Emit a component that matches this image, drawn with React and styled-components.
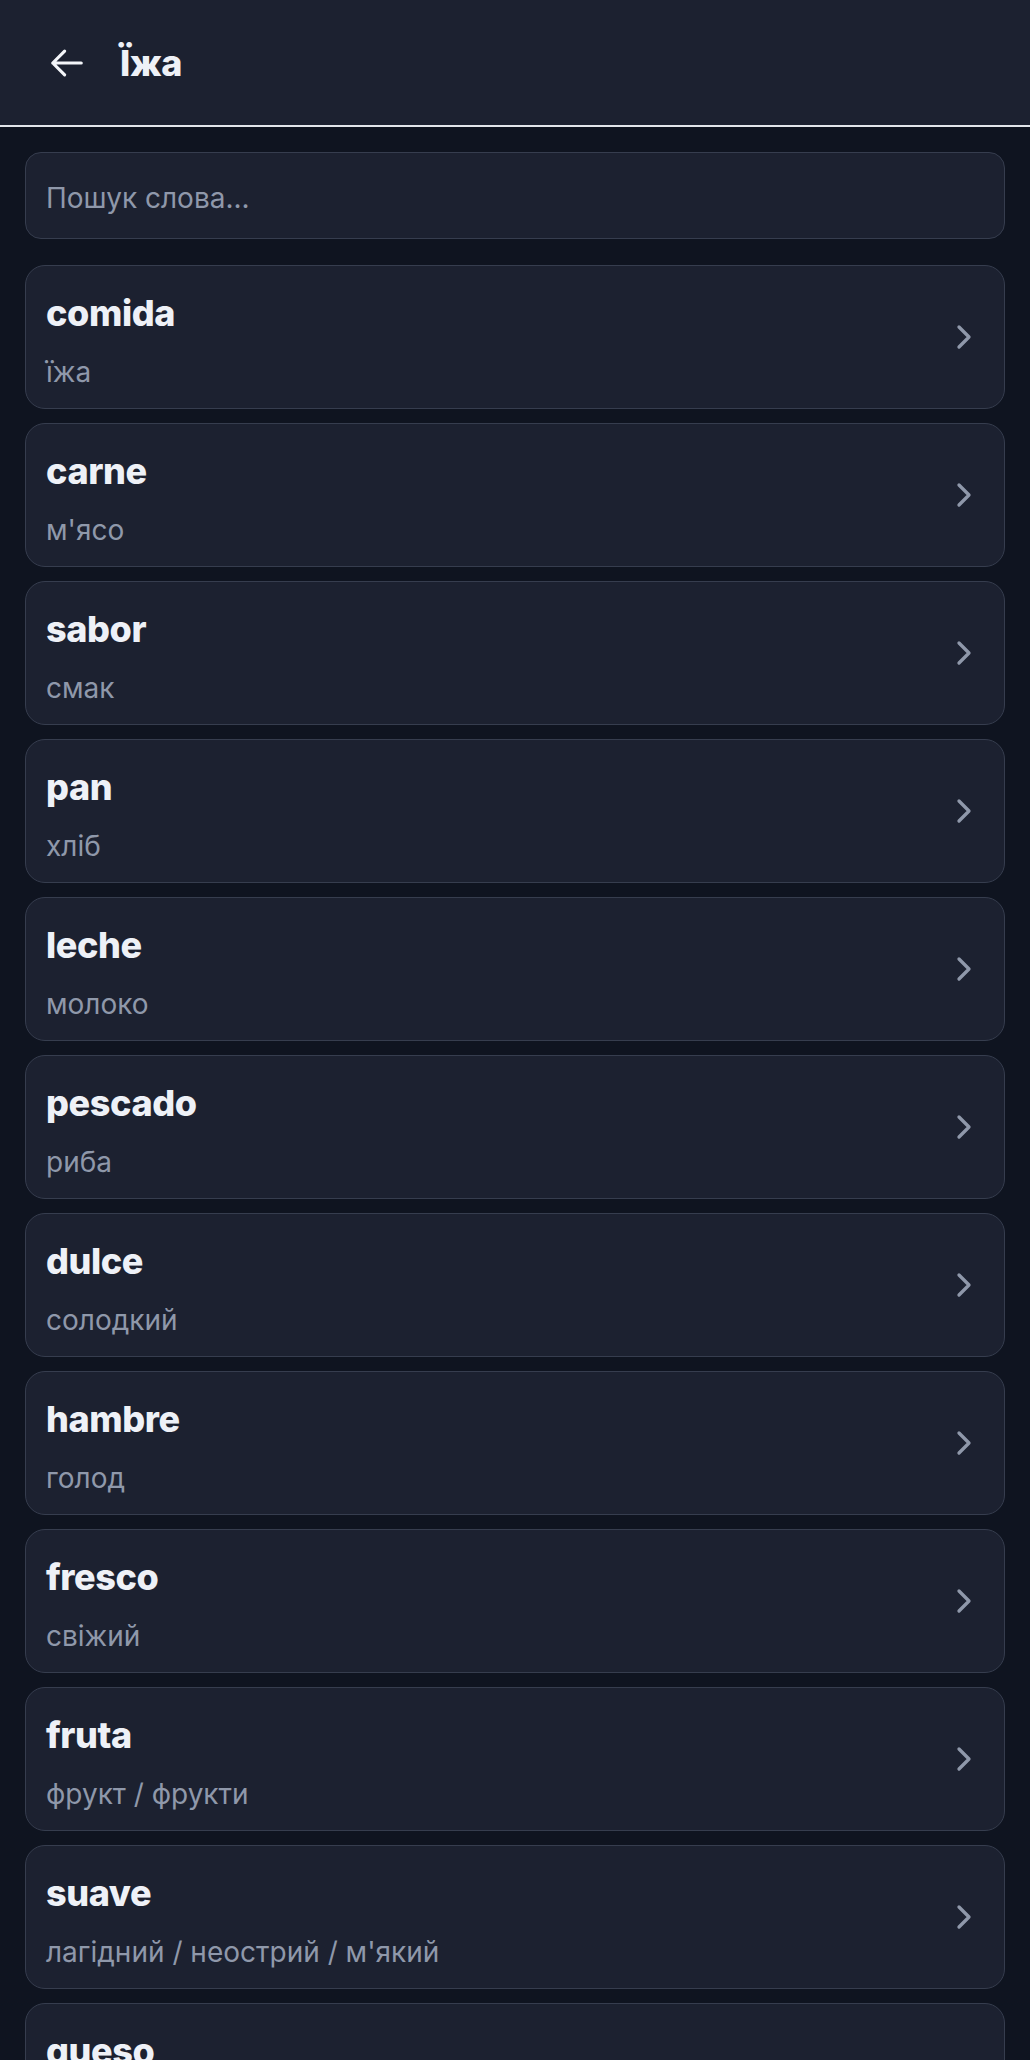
import React from 'react';
import styled, { createGlobalStyle } from 'styled-components';

const GlobalStyle = createGlobalStyle`
  html, body {
    margin: 0;
    padding: 0;
    background: #0f1420;
  }
  body {
    font-family: Inter, "Noto Sans", "Liberation Sans", sans-serif;
    -webkit-font-smoothing: antialiased;
  }
  * {
    box-sizing: border-box;
  }
`;

const words = [
  { es: 'comida', uk: 'їжа' },
  { es: 'carne', uk: "м'ясо" },
  { es: 'sabor', uk: 'смак' },
  { es: 'pan', uk: 'хліб' },
  { es: 'leche', uk: 'молоко' },
  { es: 'pescado', uk: 'риба' },
  { es: 'dulce', uk: 'солодкий' },
  { es: 'hambre', uk: 'голод' },
  { es: 'fresco', uk: 'свіжий' },
  { es: 'fruta', uk: 'фрукт / фрукти' },
  { es: 'suave', uk: "лагідний / неострий / м'який" },
  { es: 'queso', uk: 'сир' },
  { es: 'agua', uk: 'вода' }
];

const Page = styled.div`
  min-height: 100vh;
  background: #0f1420;
`;

const Header = styled.header`
  height: 127px;
  display: flex;
  align-items: center;
  gap: 34px;
  padding: 0 0 0 48px;
  background: #1c2130;
  border-bottom: 2px solid #e2e5ea;
`;

const BackButton = styled.button`
  display: flex;
  align-items: center;
  justify-content: center;
  padding: 0;
  margin: 0;
  border: 0;
  background: transparent;
  color: #f3f5f9;
  cursor: pointer;
`;

const Title = styled.h1`
  margin: 0;
  font-size: 36px;
  font-weight: 800;
  color: #eef1f7;
  letter-spacing: -0.4px;
`;

const Content = styled.main`
  display: flex;
  flex-direction: column;
  padding: 25px 25px 0;
`;

const SearchInput = styled.input`
  height: 87px;
  width: 100%;
  padding: 4px 20px 0;
  margin-bottom: 26px;
  border: 1px solid #363d4e;
  border-radius: 16px;
  background: #1c2130;
  color: #eef1f7;
  font-family: inherit;
  font-size: 28px;
  outline: none;

  &::placeholder {
    color: #8f98aa;
  }
`;

const List = styled.ul`
  list-style: none;
  margin: 0;
  padding: 0;
  display: flex;
  flex-direction: column;
  gap: 14px;
`;

const Card = styled.li`
  display: flex;
  align-items: center;
  justify-content: space-between;
  padding: 18px 20px;
  border: 1px solid #363d4e;
  border-radius: 20px;
  background: #1c2130;
  cursor: pointer;
`;

const WordText = styled.div`
  display: flex;
  flex-direction: column;
  gap: 19px;
  padding-top: 7px;
`;

const Word = styled.span`
  font-size: 36px;
  line-height: 44px;
  font-weight: 800;
  color: #eef1f7;
  letter-spacing: -0.4px;
`;

const Translation = styled.span`
  font-size: 28px;
  line-height: 36px;
  color: #8f98aa;
`;

const Chevron = styled.svg`
  flex-shrink: 0;
  color: #8f98aa;
`;

const ArrowLeft = () => (
  <svg width="38" height="38" viewBox="0 0 24 24" fill="none" stroke="currentColor" strokeWidth="2" strokeLinecap="round" strokeLinejoin="round">
    <path d="M10.5 19.5 3 12l7.5-7.5M3 12h18" />
  </svg>
);

export default function App() {
  return (
    <Page>
      <GlobalStyle />
      <Header>
        <BackButton aria-label="Назад">
          <ArrowLeft />
        </BackButton>
        <Title>Їжа</Title>
      </Header>
      <Content>
        <SearchInput placeholder="Пошук слова..." />
        <List>
          {words.map(w => (
            <Card key={w.es}>
              <WordText>
                <Word>{w.es}</Word>
                <Translation>{w.uk}</Translation>
              </WordText>
              <Chevron width="40" height="40" viewBox="0 0 24 24" fill="none" stroke="currentColor" strokeWidth="2" strokeLinecap="round" strokeLinejoin="round">
                <path d="m9 18 6-6-6-6" />
              </Chevron>
            </Card>
          ))}
        </List>
      </Content>
    </Page>
  );
}
